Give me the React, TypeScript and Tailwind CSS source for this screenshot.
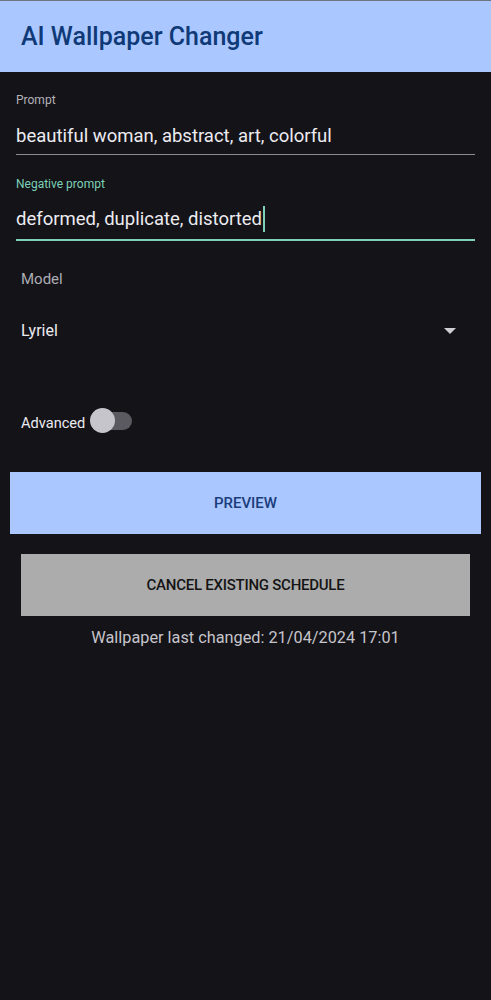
import React from 'react';

function Field({ label, value, focused }: { label: string; value: string; focused?: boolean }) {
  return (
    <div className={focused ? 'border-b-2 border-[#7dd0b6] pb-[7px]' : 'border-b border-[#8c8b91] pb-[6px]'}>
      <div className={`text-[12px] leading-[16px] ${focused ? 'text-[#7dd0b6]' : 'text-[#b4b3b9]'}`}>{label}</div>
      <div className={`${focused ? 'mt-[14px]' : 'mt-[16px]'} flex items-center text-[18.5px] leading-[24px] text-[#ecebf0]`}>
        <span>{value}</span>
        {focused && <span className="ml-px inline-block h-[26px] w-[2px] bg-[#7dd0b6]" />}
      </div>
    </div>
  );
}

export default function App() {
  return (
    <div className="min-h-screen w-[491px] bg-[#141318] font-['Roboto',sans-serif]">
      <div className="h-px bg-[#6f7480]" />
      <header className="flex h-[71px] items-center bg-[#aac7ff] px-[21px]">
        <h1 className="text-[25px] font-medium leading-[32px] text-[#0f3a77]">AI Wallpaper Changer</h1>
      </header>

      <div className="px-4 pt-5">
        <Field label="Prompt" value="beautiful woman, abstract, art, colorful" />
        <div className="mt-[21px]">
          <Field label="Negative prompt" value="deformed, duplicate, distorted" focused />
        </div>
      </div>

      <div className="px-[21px] pt-[28px]">
        <div className="text-[15px] leading-[20px] text-[#aeadb3]">Model</div>
        <div className="mt-[30px] flex h-6 items-center justify-between pr-[14px]">
          <span className="text-[16px] leading-[24px] text-[#ecebf0]">Lyriel</span>
          <svg width="12" height="6" viewBox="0 0 12 6">
            <path d="M0 0 L12 0 L6 6 Z" fill="#cfced4" />
          </svg>
        </div>

        <div className="mt-[65px] flex h-[26px] items-center">
          <span className="pt-1 text-[14.6px] leading-[20px] text-[#ecebf0]">Advanced</span>
          <div className="relative ml-[5px] h-[26px] w-[42px]">
            <div className="absolute left-[7px] top-[4px] h-[18px] w-[35px] rounded-full bg-[#5b5a60]" />
            <div className="absolute left-0 top-0 h-[25px] w-[25px] rounded-full bg-[#c6c5cb]" />
          </div>
        </div>
      </div>

      <div className="mx-[10px] mt-[38px] flex h-[62px] items-center justify-center bg-[#aac7ff]">
        <span className="text-[15px] font-medium text-[#1a3d7b]">PREVIEW</span>
      </div>

      <div className="mx-[21px] mt-[20px] flex h-[62px] items-center justify-center bg-[#acacac]">
        <span className="text-[15px] font-medium tracking-[-0.25px] text-[#141414]">CANCEL EXISTING SCHEDULE</span>
      </div>

      <p className="mt-[10px] text-center text-[16.3px] leading-[24px] text-[#c6c5cb]">
        Wallpaper last changed: 21/04/2024 17:01
      </p>
    </div>
  );
}
